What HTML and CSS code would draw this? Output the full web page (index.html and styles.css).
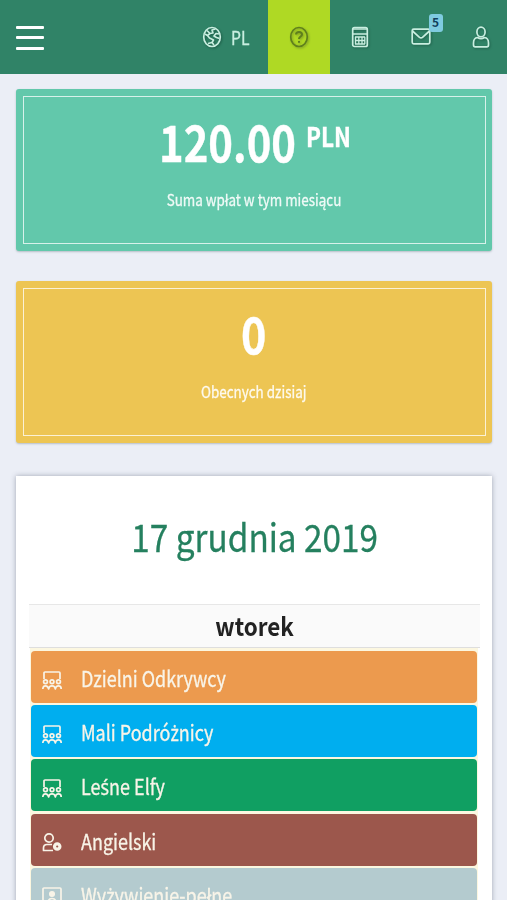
FILE: index.html
```html
<!DOCTYPE html>
<html lang="pl">
<head>
<meta charset="utf-8">
<title>Panel</title>
<link rel="stylesheet" href="styles.css">
</head>
<body>
<svg width="0" height="0" class="defs">
  <symbol id="group" viewBox="0 0 20 20">
    <path d="M2 9V3Q2 2 3 2H17Q18 2 18 3V9"/>
    <circle cx="3.5" cy="11.800" r="1.900"/><circle cx="10" cy="11.800" r="1.900"/><circle cx="16.500" cy="11.800" r="1.900"/>
    <path d="M.8 19Q1 15.800 3.500 15.800T6.700 19Q7 15.800 10 15.800T13.300 19Q13.800 15.800 16.500 15.800T19.200 19"/>
  </symbol>
</svg>
<header class="bar">
  <button class="menu" aria-label="Menu"><i></i><i></i><i></i></button>
  <a class="lang">
    <svg class="globe" viewBox="0 0 20 22"><ellipse cx="10" cy="11" rx="8.300" ry="9.500"/><path d="M5 4.500L8 7.500L5.500 9.500L7.500 12L11.500 14L10 16.500L6 17.500M8 7.500L11 7L10 4L13.500 3M17.500 8L14 7.500L12 10L14.500 11.500L17.500 12.500M3 8L5.500 9.500M10 16.500L12 19"/></svg>
    <span class="lang-name">PL</span>
  </a>
  <a class="help">
    <svg viewBox="0 0 20 22"><ellipse cx="10" cy="11" rx="8.300" ry="9.500"/><path class="thick" d="M7 8.500Q7 6 10 6T13 8.500C13 10.500 10 10.500 10 13M10 15V16.800"/></svg>
  </a>
  <a class="tool calc">
    <svg viewBox="0 0 18 22"><rect x="1.700" y="1.500" width="14.600" height="19" rx="1.800"/><path d="M2 8H16M2 3H16M4 11H14M4 14.500H14M4 18H14M4.500 11V18M7.800 11V18M11 11V18M13.800 11V18"/></svg>
  </a>
  <a class="tool mail">
    <svg viewBox="0 0 20 17"><rect x="1.200" y="1.200" width="17.600" height="14.600" rx="1.500"/><path d="M1.500 3L8.500 9.300Q10 10.500 11.500 9.300L18.500 3"/></svg>
    <span class="badge">5</span>
  </a>
  <a class="tool user">
    <svg viewBox="0 0 18 22"><ellipse cx="9" cy="6" rx="4.100" ry="4.800"/><path d="M5.500 11.500Q1.500 12 1.500 17V19Q1.500 20.800 3.200 20.800H14.800Q16.500 20.800 16.500 19V17Q16.500 12 12.500 11.500Q9 14 5.500 11.500Z"/></svg>
  </a>
</header>
<main>
  <section class="stat green"><div class="frame">
    <div class="value"><span class="num">120.00</span><span class="unit">PLN</span></div>
    <div class="label"><span>Suma wpłat w tym miesi<i>ą</i>cu</span></div>
  </div></section>
  <section class="stat yellow"><div class="frame">
    <div class="value"><span class="zero">0</span></div>
    <div class="label"><span>Obecnych dzisiaj</span></div>
  </div></section>
  <section class="calendar">
    <h2><span>17 grudnia 2019</span></h2>
    <div class="weekday"><span>wtorek</span></div>
    <div class="events">
      <div class="event orange"><svg><use href="#group"/></svg><span>Dzielni Odkrywcy</span></div>
      <div class="event blue"><svg><use href="#group"/></svg><span>Mali Podró<i>ż</i>nicy</span></div>
      <div class="event leaf"><svg><use href="#group"/></svg><span>Le<i>ś</i>ne Elfy</span></div>
      <div class="event brown"><svg viewBox="0 0 20 20"><circle cx="7" cy="6" r="4.200"/><path d="M11 18.500H1.500V16Q1.500 12.500 5 12.500H10"/><circle class="dot" cx="15.200" cy="14.500" r="2.700"/></svg><span>Angielski</span></div>
      <div class="event grey"><svg viewBox="0 0 20 20"><rect x="1" y="2" width="18" height="15" rx="1"/><circle class="solid" cx="10" cy="8" r="2.200"/><path d="M6 17Q6 12.500 10 12.500T14 17"/></svg><span>Wy<i>ż</i>ywienie-pełne</span></div>
    </div>
  </section>
</main>
</body>
</html>
```
FILE: styles.css
```css
* { box-sizing: border-box; }
html { height: 100%; overflow: hidden; }
body {
  margin: 0;
  height: 900px;
  overflow: hidden;
  background: #ebeef6;
  font-family: "Noto Sans CJK SC", "Noto Sans", sans-serif;
  color: #fff;
}
.defs { display: none; }
svg { flex: none; fill: none; stroke: currentColor; stroke-width: 1.7; stroke-linejoin: round; overflow: visible; }
span { display: inline-block; white-space: nowrap; }
/* accented letters missing from the main family */
span i { font-family: "Noto Sans", sans-serif; font-style: normal; line-height: 0; }

.bar {
  display: flex;
  align-items: center;
  height: 73.5px;
  background: #308367;
  color: #c9eee0;
}
.menu {
  display: flex;
  flex: none;
  flex-direction: column;
  gap: 7.5px;
  width: 28px;
  margin: 2px 0 0 16px;
  padding: 0;
  border: 0;
  background: none;
}
.menu i { height: 3px; background: #fff; border-radius: 1px; }
.lang { display: flex; flex: none; align-items: center; margin-left: 158px; width: 65.500px; }
.globe { width: 20px; height: 22px; filter: drop-shadow(1px 1px 1px #1b5a45); }
.lang-name {
  margin-left: 8.500px;
  width: 20px;
  font-size: 18.500px;
  line-height: 24px;
  transform: scaleX(.85);
  transform-origin: left;
  -webkit-text-stroke: .3px;
}
.help {
  display: flex;
  flex: none;
  align-items: center;
  justify-content: center;
  width: 62.500px;
  height: 100%;
  background: #afd924;
  color: #5f7f1d;
}
.help svg { width: 20px; height: 22px; filter: drop-shadow(1px 1px 1px #7f9e25); }
.thick { stroke-width: 2; }
.tool { display: flex; flex: none; position: relative; width: 60.500px; justify-content: center; }
.tool svg { filter: drop-shadow(1px 1px 1px #20634d); }
.calc svg { width: 18px; height: 22px; }
.calc path { stroke-width: 1.300; }
.mail svg { width: 20px; height: 17px; }
.tool.user { width: 18px; margin-left: 21px; }
.user svg { width: 18px; height: 22px; }
.badge {
  position: absolute;
  left: 38px;
  top: -14px;
  width: 14px;
  height: 18px;
  border-radius: 3px;
  background: #7fcbe0;
  color: #123f5c;
  font-size: 12px;
  font-weight: 700;
  line-height: 16px;
  text-align: center;
}

main { padding: 15px 15px 0 16px; }
.stat {
  height: 162.500px;
  margin-bottom: 29.500px;
  padding: 7.500px 6.500px;
  border-radius: 3px;
  box-shadow: 0 1px 2px rgba(60, 80, 90, .3);
}
.green { background: #62c8ab; }
.yellow { background: #edc553; }
.frame { height: 100%; border: 1.500px solid rgba(255, 255, 255, .75); text-align: center; }
.value {
  display: flex;
  justify-content: center;
  height: 88px;
  padding-top: 12px;
  font-weight: 700;
  -webkit-text-stroke: .4px;
}
.num, .zero { font-size: 49.500px; line-height: 64px; }
.num { width: 137px; transform: scaleX(.845); transform-origin: left; }
.zero { transform: scaleX(.87); }
.unit { margin-left: 10px; width: 43px; font-size: 26.500px; line-height: 54px; transform: scaleX(.85); transform-origin: left; }
.label { height: 28px; color: rgba(255, 255, 255, .88); font-size: 16px; line-height: 28px; -webkit-text-stroke: .3px; }
.label span { transform: scaleX(.84); }

.calendar {
  height: 500px;
  margin-top: 32.500px;
  padding: 0 12px 0 13px;
  background: #fff;
  box-shadow: 0 0 5px rgba(70, 80, 100, .45);
}
h2 {
  height: 128.500px;
  margin: 0;
  color: #25805f;
  font-size: 38px;
  font-weight: 400;
  line-height: 119px;
  text-align: center;
  -webkit-text-stroke: .3px;
}
h2 span { transform: scaleX(.877); }
.weekday {
  height: 44px;
  border-top: 1.500px solid #e7e7e7;
  border-bottom: 1.500px solid #dedede;
  background: #fafafa;
  color: #222;
  font-size: 25.500px;
  font-weight: 700;
  line-height: 40px;
  text-align: center;
}
.weekday span { transform: scaleX(.88); }
.events {
  display: grid;
  gap: 2.200px;
  margin: 0 2px 0 1px;
  padding: 3px 1px 0 1px;
  background: #fcf7e0;
}
.event {
  display: flex;
  align-items: center;
  height: 52px;
  padding: 4px 0 0 11px;
  border-radius: 4px;
  font-size: 21.500px;
  color: #f8f4e8;
}
.event svg { width: 20px; height: 20px; margin-top: 1px; }
.event span { margin: -2px 0 0 19px; line-height: 40px; transform: scaleX(.836); transform-origin: left; -webkit-text-stroke: .3px; }
.dot { stroke-width: 3.200; }
.solid { fill: currentColor; }
.orange { background: #ec9a4e; }
.blue { background: #00aeef; }
.leaf { background: #109f62; }
.brown { background: #9c574c; }
.grey { background: #b4cbcf; }
```
